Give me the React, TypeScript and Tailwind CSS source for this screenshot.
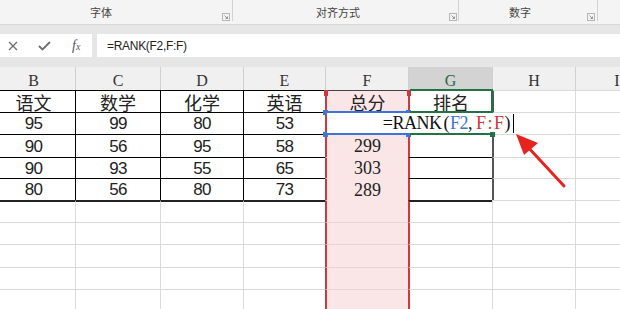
import React from "react";

const colW = "grid-cols-[83px_85px_83px_82px_83px_84px_83px_83px]";
const headers = ["B", "C", "D", "E", "F", "G", "H", "I"];
const data: string[][] = [
  ["语文", "数学", "化学", "英语", "总分", "排名", "", ""],
  ["95", "99", "80", "53", "", "", "", ""],
  ["90", "56", "95", "58", "299", "", "", ""],
  ["90", "93", "55", "65", "303", "", "", ""],
  ["80", "56", "80", "73", "289", "", "", ""],
  ["", "", "", "", "", "", "", ""],
  ["", "", "", "", "", "", "", ""],
  ["", "", "", "", "", "", "", ""],
  ["", "", "", "", "", "", "", ""],
  ["", "", "", "", "", "", "", ""],
];

function topB(r: number, c: number): string {
  if (r <= 4) {
    if (c <= 3) return "border-t border-t-black";
    if (c === 4) return r === 0 ? "border-t border-t-[#444]" : "border-t border-t-transparent";
    if (c === 5) return r <= 2 ? "border-t border-t-transparent" : "border-t border-t-black";
    return "border-t border-t-[#dadada]";
  }
  if (r === 5) {
    if (c <= 3 || c === 5) return "border-t-2 border-t-[#222]";
    if (c === 4) return "border-t border-t-transparent";
    return "border-t border-t-[#dadada]";
  }
  if (c === 4) return "border-t border-t-[#e8d4d5]";
  return "border-t border-t-[#dadada]";
}

function leftB(r: number, c: number): string {
  if (c === 0) return "";
  if (c === 4 || c === 5) return "border-l-2 border-l-[#d0383f]";
  if (c === 6) return r <= 4 ? "border-l-2 border-l-[#555]" : "border-l border-l-[#dadada]";
  if (c === 7) return "border-l border-l-[#dadada]";
  return r <= 4 ? "border-l border-l-black" : "border-l border-l-[#dadada]";
}

function textCls(r: number, c: number): string {
  if (r === 0) return "font-['Noto_Sans_CJK_SC',sans-serif] text-[18px] text-[#222] leading-none";
  if (c === 4) return "font-['Liberation_Serif',serif] text-[18px] text-[#222] leading-none";
  return "font-['Liberation_Sans',sans-serif] text-[17px] tracking-[-0.8px] text-[#222] leading-none";
}

function Launcher() {
  return (
    <svg width="8" height="8" viewBox="0 0 8 8" className="mt-[13px] shrink-0">
      <rect x="0.5" y="0.5" width="7" height="7" fill="none" stroke="#b5b5b5" strokeWidth="1" />
      <path d="M2.5 2.5 L5.5 5.5 M5.5 3.5 L5.5 5.5 L3.5 5.5" fill="none" stroke="#8a8a8a" strokeWidth="0.9" />
    </svg>
  );
}

export default function App() {
  return (
    <div className="relative h-[309px] w-[620px] overflow-hidden bg-white font-['Liberation_Sans',sans-serif]">
      {/* Ribbon group labels */}
      <div className="flex h-[25px] items-start border-b border-[#d8d8d8] bg-[#f4f4f4] font-['Noto_Sans_CJK_SC',sans-serif] text-[11px] text-[#444]">
        <div className="flex h-[21px] w-[233px] shrink-0 border-r border-[#d2d2d2]">
          <div className="w-[202px] pt-[5px] text-center leading-[14px]">字体</div>
          <div className="ml-[20px]"><Launcher /></div>
        </div>
        <div className="flex h-[21px] w-[226px] shrink-0 border-r border-[#d2d2d2]">
          <div className="w-[210px] pt-[5px] text-center leading-[14px]">对齐方式</div>
          <div className="ml-[6px]"><Launcher /></div>
        </div>
        <div className="flex h-[21px] w-[139px] shrink-0 border-r border-[#d2d2d2]">
          <div className="w-[122px] pt-[5px] text-center leading-[14px]">数字</div>
          <div className="ml-[6px]"><Launcher /></div>
        </div>
        <div className="flex-1" />
      </div>

      {/* Formula bar */}
      <div className="flex h-[42px] bg-[#e6e6e6] pb-[10px] pt-[9px]">
        <div className="flex w-[92px] shrink-0 items-center bg-white">
          <svg width="10" height="10" viewBox="0 0 10 10" className="ml-[8px]">
            <path d="M1 1 L9 9 M9 1 L1 9" stroke="#6e6e6e" strokeWidth="1.3" />
          </svg>
          <svg width="13" height="10" viewBox="0 0 13 10" className="ml-[20px]">
            <path d="M1 5 L4.5 8.5 L12 1" fill="none" stroke="#6e6e6e" strokeWidth="1.8" />
          </svg>
          <span className="ml-[21px] font-['Liberation_Serif',serif] text-[14px] italic leading-none text-[#555]">
            f<span className="text-[10px]">x</span>
          </span>
        </div>
        <div className="ml-[5px] flex flex-1 items-center bg-white pl-[10px] text-[12px] tracking-[-0.3px] text-[#222]">
          =RANK(F2,F:F)
        </div>
      </div>

      {/* Sheet grid */}
      <div className={`-ml-[8px] grid w-[666px] ${colW} grid-rows-[23px_22px_22px_23px_21px_22px_22px_22px_23px_22px_21px]`}>
        {headers.map((h, c) => (
          <div
            key={h}
            className={`flex items-center justify-center pt-[4px] font-['Liberation_Serif',serif] text-[16px] leading-none ${
              c === 5 ? "bg-[#d3d3d3] text-[#1e6b3f]" : "bg-[#f0f0f0] text-[#333]"
            } ${c === 0 ? "" : "border-l border-l-[#d0d0d0]"}`}
          >
            {h}
          </div>
        ))}
        {data.map((row, r) =>
          row.map((v, c) => (
            <div
              key={`${r}-${c}`}
              className={`flex items-center justify-center ${topB(r, c)} ${leftB(r, c)} ${
                c === 4 && r !== 1 ? "bg-[#fae6e7]" : "bg-white"
              } ${textCls(r, c)}`}
            >
              {v}
            </div>
          ))
        )}
      </div>

      {/* Red range handles (F:F) */}
      <div className="pointer-events-none absolute left-[324px] top-[90px] h-[6px] w-[4px] bg-[#d0383f]" />
      <div className="pointer-events-none absolute left-[407px] top-[90px] h-[6px] w-[4px] bg-[#d0383f]" />

      {/* Blue box F2 */}
      <div className="pointer-events-none absolute left-[325px] top-[111px] h-[2px] w-[85px] bg-[#3f74d6]" />
      <div className="pointer-events-none absolute left-[325px] top-[133px] h-[2px] w-[85px] bg-[#3f74d6]" />
      <div className="pointer-events-none absolute left-[323px] top-[110px] h-[5px] w-[5px] bg-[#3f74d6]" />
      <div className="pointer-events-none absolute left-[406px] top-[110px] h-[5px] w-[5px] bg-[#3f74d6]" />
      <div className="pointer-events-none absolute left-[323px] top-[132px] h-[5px] w-[5px] bg-[#3f74d6]" />
      <div className="pointer-events-none absolute left-[406px] top-[132px] h-[5px] w-[5px] bg-[#3f74d6]" />

      {/* Green selection G1 / G2 */}
      <div className="pointer-events-none absolute left-[410px] top-[89px] h-[24px] w-[83px] border-b-2 border-r-2 border-t-2 border-[#217346]" />
      <div className="pointer-events-none absolute left-[410px] top-[133px] h-[2px] w-[82px] bg-[#217346]" />

      {/* In-cell editor */}
      <div className="absolute left-[327px] top-[113px] flex h-[20px] w-[188px] items-center justify-end bg-white pr-[1px]">
        <span className="font-['Liberation_Serif',serif] text-[18px] leading-none tracking-[-0.5px] text-[#111]">
          =RANK<span className="ml-[2px] mr-[1px]">(</span>
          <span className="text-[#3f74d6]">F2</span>, <span className="text-[#d0383f]">F<span className="mx-[2px]">:</span>F</span>
          <span className="ml-[1px]">)</span>
        </span>
        <span className="ml-[3px] h-[19px] w-px bg-black" />
      </div>

      <div className="pointer-events-none absolute left-[490px] top-[132px] h-[5px] w-[5px] bg-[#217346]" />

      {/* Red arrow */}
      <svg className="pointer-events-none absolute left-0 top-0" width="620" height="309" viewBox="0 0 620 309">
        <line x1="564" y1="186" x2="526" y2="145" stroke="#e8231f" strokeWidth="3" strokeLinecap="round" />
        <polygon points="516,134 538,143 524,155" fill="#e8231f" />
      </svg>
    </div>
  );
}
